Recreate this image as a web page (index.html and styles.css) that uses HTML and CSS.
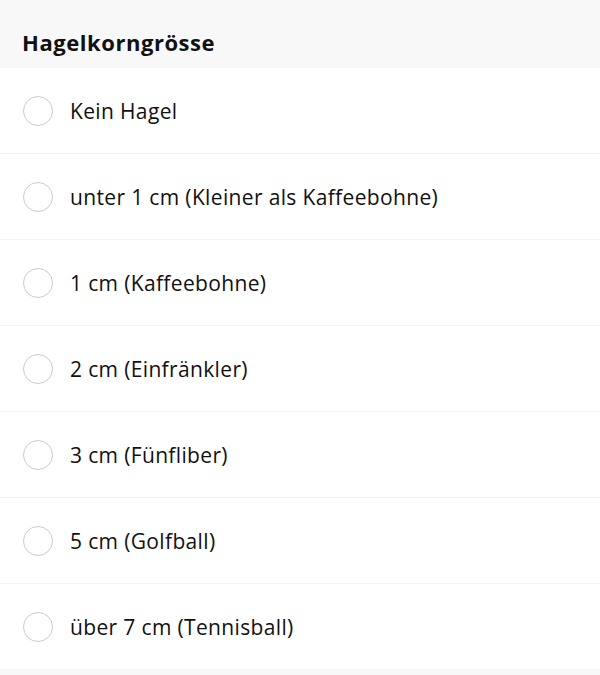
FILE: index.html
```html
<!DOCTYPE html>
<html lang="de">
<head>
<meta charset="utf-8">
<title>Hagelkorngrösse</title>
<link rel="stylesheet" href="styles.css">
</head>
<body>
<div class="page">
  <div class="header">Hagelkorngrösse</div>
  <ul class="options">
    <li class="option"><span class="radio"></span><span class="label">Kein Hagel</span></li>
    <li class="option"><span class="radio"></span><span class="label">unter 1 cm (Kleiner als Kaffeebohne)</span></li>
    <li class="option"><span class="radio"></span><span class="label">1 cm (Kaffeebohne)</span></li>
    <li class="option"><span class="radio"></span><span class="label">2 cm (Einfränkler)</span></li>
    <li class="option"><span class="radio"></span><span class="label">3 cm (Fünfliber)</span></li>
    <li class="option"><span class="radio"></span><span class="label">5 cm (Golfball)</span></li>
    <li class="option"><span class="radio"></span><span class="label">über 7 cm (Tennisball)</span></li>
  </ul>
</div>
</body>
</html>
```

FILE: styles.css
```css
html, body {
  margin: 0;
  padding: 0;
  background: #f8f8f8;
}
body {
  font-family: "Open Sans", "Noto Sans", sans-serif;
  color: #111;
}
.page {
  width: 600px;
}
.header {
  height: 68px;
  display: flex;
  align-items: center;
  padding: 16px 22px 0;
  font-size: 22px;
  font-weight: 700;
  letter-spacing: 0.55px;
  background: #f8f8f8;
  box-sizing: border-box;
}
.options {
  list-style: none;
  margin: 0;
  padding: 0;
  background: #fff;
}
.option {
  height: 85px;
  display: flex;
  align-items: center;
  padding-left: 23px;
  border-bottom: 1px solid #f3f3f3;
  background: #fff;
}
.radio {
  width: 30px;
  height: 30px;
  box-sizing: border-box;
  border: 1.5px solid #cbcbcb;
  border-radius: 50%;
  flex: none;
}
.label {
  margin-left: 17px;
  font-size: 21px;
  letter-spacing: 0.35px;
  color: #111;
}
```
